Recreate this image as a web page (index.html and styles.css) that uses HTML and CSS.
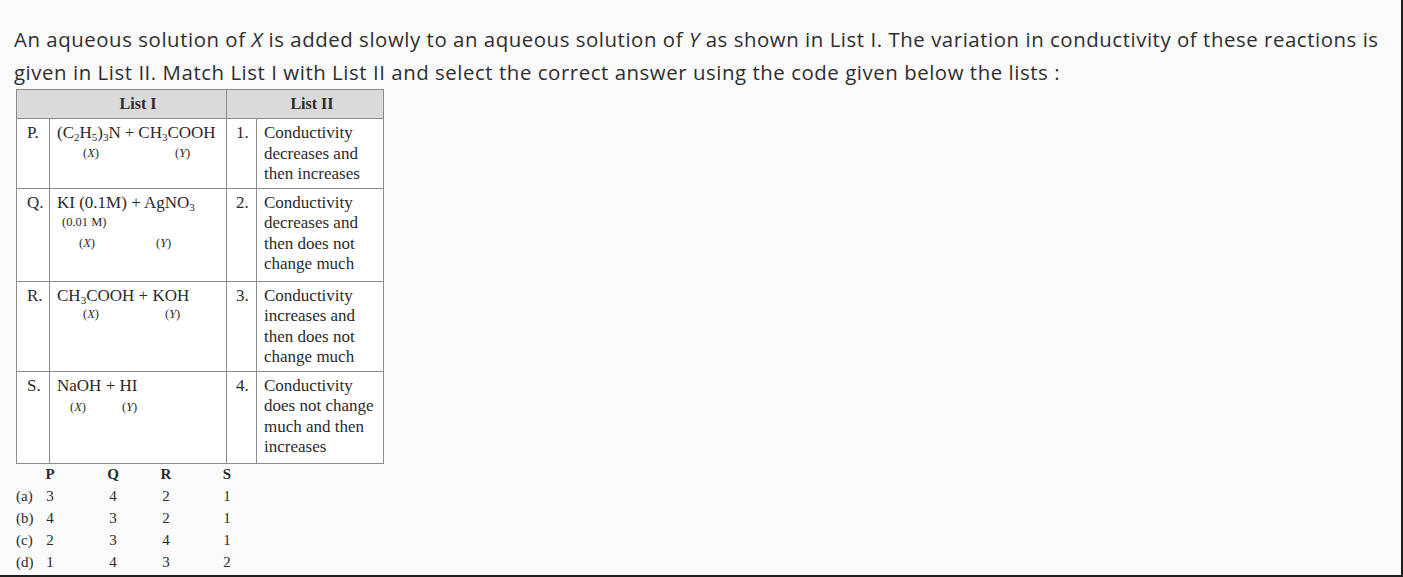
FILE: index.html
```html
<!DOCTYPE html>
<html>
<head>
<meta charset="utf-8">
<link rel="stylesheet" href="styles.css">
</head>
<body>
<div class="page">
  <p class="question">An aqueous solution of <i>X</i> is added slowly to an aqueous solution of <i>Y</i> as shown in List I. The variation in conductivity of these reactions is given in List II. Match List I with List II and select the correct answer using the code given below the lists :</p>
  <table class="match">
    <colgroup>
      <col class="c-lab"><col class="c-eq"><col class="c-num"><col class="c-desc">
    </colgroup>
    <thead>
      <tr><th colspan="2" class="h1">List I</th><th colspan="2" class="h2">List II</th></tr>
    </thead>
    <tbody>
      <tr class="r-p">
        <td class="lab">P.</td>
        <td class="eq"><div>(C<sub>2</sub>H<sub>5</sub>)<sub>3</sub>N<span class="pl">+</span>CH<sub>3</sub>COOH</div><div class="tags"><span class="tag t-px">(<i>X</i>)</span><span class="tag t-py">(<i>Y</i>)</span></div></td>
        <td class="num">1.</td>
        <td class="desc">Conductivity decreases and then increases</td>
      </tr>
      <tr class="r-q">
        <td class="lab">Q.</td>
        <td class="eq"><div>KI (0.1M) + AgNO<sub>3</sub></div><div class="conc">(0.01 M)</div><div class="tags"><span class="tag t-qx">(<i>X</i>)</span><span class="tag t-qy">(<i>Y</i>)</span></div></td>
        <td class="num">2.</td>
        <td class="desc">Conductivity decreases and then does not change much</td>
      </tr>
      <tr class="r-r">
        <td class="lab">R.</td>
        <td class="eq"><div>CH<sub>3</sub>COOH + KOH</div><div class="tags"><span class="tag t-rx">(<i>X</i>)</span><span class="tag t-ry">(<i>Y</i>)</span></div></td>
        <td class="num">3.</td>
        <td class="desc">Conductivity increases and then does not change much</td>
      </tr>
      <tr class="r-s">
        <td class="lab">S.</td>
        <td class="eq"><div>NaOH + HI</div><div class="tags"><span class="tag t-sx">(<i>X</i>)</span><span class="tag t-sy">(<i>Y</i>)</span></div></td>
        <td class="num">4.</td>
        <td class="desc">Conductivity does not change much and then increases</td>
      </tr>
    </tbody>
  </table>
  <div class="codes">
    <span class="k"></span><span class="v p hd">P</span><span class="v q hd">Q</span><span class="v r hd">R</span><span class="v s hd">S</span>
    <span class="k">(a)</span><span class="v p">3</span><span class="v q">4</span><span class="v r">2</span><span class="v s">1</span>
    <span class="k">(b)</span><span class="v p">4</span><span class="v q">3</span><span class="v r">2</span><span class="v s">1</span>
    <span class="k">(c)</span><span class="v p">2</span><span class="v q">3</span><span class="v r">4</span><span class="v s">1</span>
    <span class="k">(d)</span><span class="v p">1</span><span class="v q">4</span><span class="v r">3</span><span class="v s">2</span>
  </div>
</div>
</body>
</html>
```

FILE: styles.css
```css
html, body {
  margin: 0;
  padding: 0;
  background: #fafafa;
}
.page {
  box-sizing: border-box;
  width: 1403px;
  height: 577px;
  padding: 23px 0 0 14px;
  border-right: 2px solid #1e1e1e;
  border-bottom: 2px solid #1e1e1e;
  overflow: hidden;
}
.question {
  margin: 0;
  font-family: "Open Sans", sans-serif;
  font-size: 20.4px;
  letter-spacing: 0.55px;
  line-height: 33px;
  color: #2e2e2e;
  width: 1372px;
}
.match {
  margin: 0 0 0 2px;
  border-collapse: collapse;
  table-layout: fixed;
  width: 367px;
  font-family: "Liberation Serif", serif;
  font-size: 17px;
  line-height: 20.5px;
  color: #2a2a2a;
  background: #fff;
  border: 1px solid #8a8a8a;
}
.c-lab { width: 33px; }
.c-eq { width: 177px; }
.c-num { width: 30px; }
.c-desc { width: 127px; }
.match th {
  background: #dadada;
  font-weight: bold;
  height: 28px;
  padding: 0;
  border: 1px solid #8a8a8a;
  font-size: 16px;
}
.h1 { padding-left: 33px !important; }
.h2 { padding-left: 14px !important; }
.match td {
  border: 1px solid #8a8a8a;
  vertical-align: top;
  padding: 4px 0 5px 7px;
}
.match td.lab { padding-left: 10px; }
.match td.num { padding-left: 9px; }
.r-p td { height: 59px; padding-bottom: 3px; }
.r-q td { height: 83px; }
.r-r td { height: 78px; padding-bottom: 3px; }
.r-s td { height: 82px; }
.match sub { font-size: 11px; line-height: 0; vertical-align: -3px; }
.pl { margin: 0 4px; }
.tags { display: flex; font-size: 12.5px; line-height: 18px; }
.conc { font-size: 12.5px; line-height: 19px; padding-left: 5px; }
.tag { display: block; }
.t-px { margin-left: 26px; }
.t-py { margin-left: 76px; }
.t-qx { margin-left: 22px; margin-top: 2px; }
.t-qy { margin-left: 61px; margin-top: 2px; }
.t-rx { margin-left: 26px; margin-top: -1px; }
.t-ry { margin-left: 66px; margin-top: -1px; }
.t-sx { margin-left: 13px; margin-top: 2px; }
.t-sy { margin-left: 36px; margin-top: 2px; }
.codes {
  display: grid;
  grid-template-columns: 24px 20px 43px 20px 33px 20px 41px 20px;
  margin: -1px 0 0 2px;
  font-family: "Liberation Serif", serif;
  font-size: 15px;
  line-height: 22px;
  color: #2a2a2a;
}
.k { grid-column: 1; }
.v { text-align: center; }
.p { grid-column: 2; }
.q { grid-column: 4; }
.r { grid-column: 6; }
.s { grid-column: 8; }
.hd { font-weight: bold; }
```
